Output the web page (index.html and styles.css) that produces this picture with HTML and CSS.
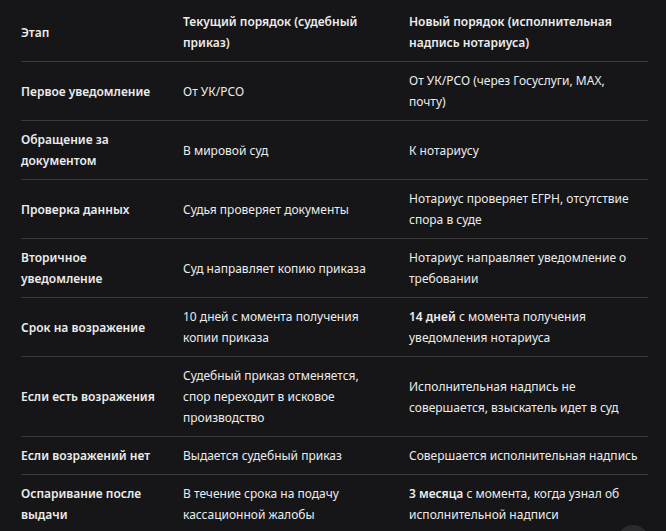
FILE: index.html
```html
<!DOCTYPE html>
<html lang="ru">
<head>
<meta charset="utf-8">
<link rel="stylesheet" href="styles.css">
</head>
<body>
<div class="wrap">
<table class="tbl">
<colgroup><col class="c1"><col class="c2"><col class="c3"></colgroup>
<thead>
<tr><th>Этап</th><th>Текущий порядок (судебный приказ)</th><th>Новый порядок (исполнительная надпись нотариуса)</th></tr>
</thead>
<tbody>
<tr><td class="k">Первое уведомление</td><td>От УК/РСО</td><td>От УК/РСО (через Госуслуги, MAX, почту)</td></tr>
<tr><td class="k">Обращение за документом</td><td>В мировой суд</td><td>К нотариусу</td></tr>
<tr><td class="k">Проверка данных</td><td>Судья проверяет документы</td><td>Нотариус проверяет ЕГРН, отсутствие спора в суде</td></tr>
<tr><td class="k">Вторичное уведомление</td><td>Суд направляет копию приказа</td><td>Нотариус направляет уведомление о требовании</td></tr>
<tr><td class="k">Срок на возражение</td><td>10 дней с момента получения копии приказа</td><td><b>14 дней</b> с момента получения уведомления нотариуса</td></tr>
<tr><td class="k">Если есть возражения</td><td>Судебный приказ отменяется, спор переходит в исковое производство</td><td>Исполнительная надпись не совершается, взыскатель идет в суд</td></tr>
<tr><td class="k">Если возражений нет</td><td>Выдается судебный приказ</td><td>Совершается исполнительная надпись</td></tr>
<tr><td class="k">Оспаривание после выдачи</td><td>В течение срока на подачу кассационной жалобы</td><td><b>3 месяца</b> с момента, когда узнал об исполнительной надписи</td></tr>
</tbody>
</table>
</div>
<div class="fab"></div>
</body>
</html>
```
FILE: styles.css
```css
html, body {
  margin: 0;
  padding: 0;
  background: #161618;
  overflow: hidden;
  height: 100%;
}
body {
  font-family: "Noto Sans", "Open Sans", sans-serif;
  font-size: 12px;
  color: #ececec;
}
.wrap {
  padding: 3px 18px 0 21px;
}
.tbl {
  width: 627px;
  border-collapse: collapse;
  table-layout: fixed;
}
.c1 { width: 162px; }
.c2 { width: 226px; }
.c3 { width: 239px; }
th, td {
  text-align: left;
  vertical-align: middle;
  padding: 8px 12px 8px 0;
  line-height: 21px;
  border-bottom: 1px solid #3a3a3c;
}
th:nth-child(2), td:nth-child(2) {
  padding-right: 22px;
}
th:last-child, td:last-child {
  padding-right: 8px;
}
th, td.k, b {
  font-weight: 600;
}
.fab {
  position: absolute;
  left: 617px;
  top: 525px;
  width: 32px;
  height: 32px;
  border-radius: 50%;
  background: #2b2b2e;
}
```
